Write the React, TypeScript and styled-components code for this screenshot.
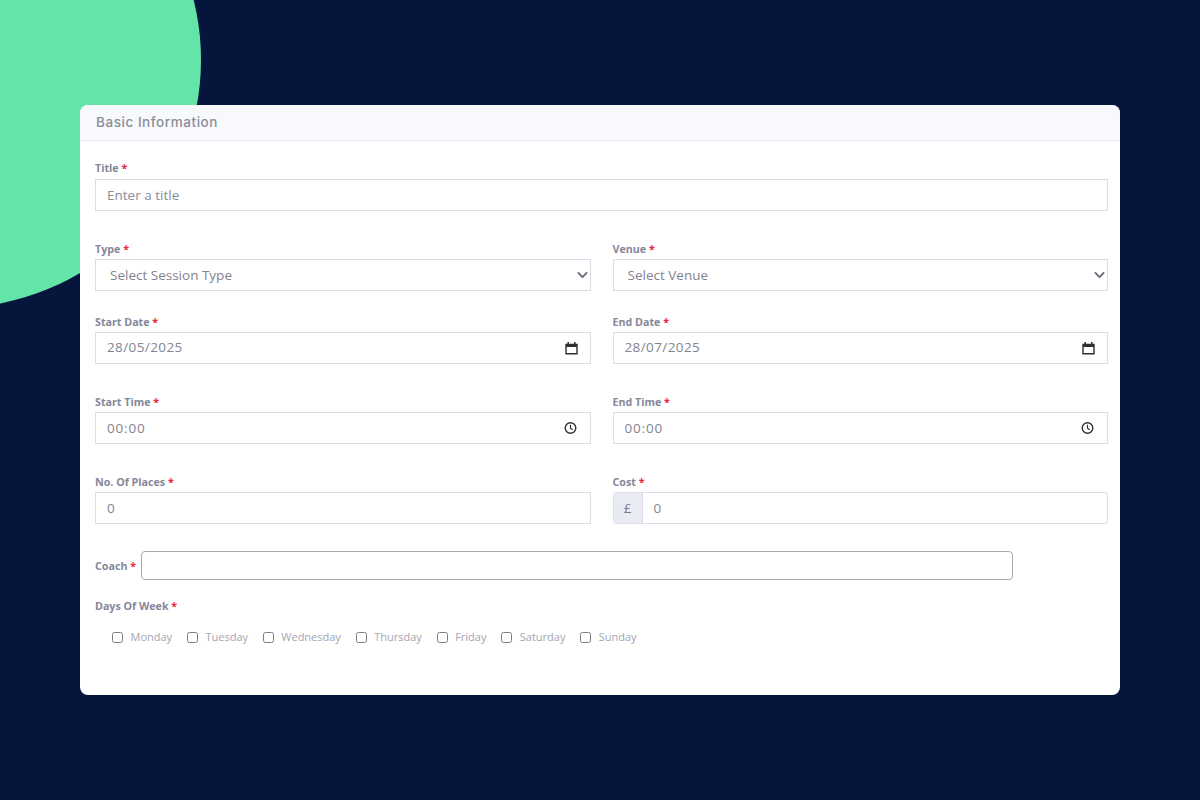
import styled, { createGlobalStyle } from "styled-components";

const GlobalStyle = createGlobalStyle`
  html, body {
    margin: 0;
    padding: 0;
    height: 100%;
    background: #05153b;
    font-family: "Open Sans", "Liberation Sans", sans-serif;
  }
  * {
    box-sizing: border-box;
  }
`;

const Page = styled.div`
  position: relative;
  width: 1200px;
  height: 800px;
  padding: 105px 80px;
  overflow: hidden;
  background: #05153b;
`;

const Blob = styled.div`
  position: absolute;
  left: -295px;
  top: -188px;
  width: 496px;
  height: 496px;
  border-radius: 50%;
  background: #64e4a8;
`;

const Card = styled.section`
  position: relative;
  height: 590px;
  background: #fff;
  border-radius: 8px;
  overflow: hidden;
`;

const CardHeader = styled.header`
  height: 36px;
  padding: 0 16px 2px;
  display: flex;
  align-items: center;
  background: #f8f9fd;
  border-bottom: 1px solid #e9ebf3;
  font-family: "Inter", sans-serif;
  font-size: 13.5px;
  font-weight: 500;
  letter-spacing: 0.55px;
  color: #8a8d9c;
`;

const Form = styled.div`
  padding: 20px 12px 0 15px;
`;

const Row = styled.div<{ $gap: number }>`
  display: grid;
  grid-template-columns: 1fr 1fr;
  column-gap: 22px;
  margin-bottom: ${(p) => p.$gap}px;
`;

const Field = styled.div<{ $full?: boolean }>`
  grid-column: ${(p) => (p.$full ? "1 / -1" : "auto")};
  min-width: 0;
`;

const Label = styled.label<{ $below?: number }>`
  display: block;
  height: 14px;
  margin-bottom: ${(p) => p.$below ?? 3}px;
  font-size: 10.7px;
  line-height: 14px;
  font-weight: 700;
  color: #85879a;
  white-space: nowrap;
`;

const Star = styled.span`
  color: #e8293f;
`;

const Control = styled.div`
  position: relative;
  display: flex;
  height: 32px;
  border: 1px solid #dcdde9;
  background: #fff;
`;

const RoundControl = styled(Control)`
  border-radius: 3px;
`;

const TextInput = styled.input<{ $spacing?: number; $lift?: number }>`
  flex: 1;
  min-width: 0;
  height: 100%;
  padding: 0 0 ${(p) => p.$lift ?? 0}px 11px;
  border: 0;
  outline: 0;
  background: transparent;
  font-family: "Open Sans", sans-serif;
  font-size: 13.5px;
  letter-spacing: ${(p) => p.$spacing ?? 0}px;
  color: #83848f;

  &::placeholder {
    color: #8b8c98;
    opacity: 1;
  }
`;

const SelectInput = styled.select`
  flex: 1;
  height: 100%;
  padding: 0 0 0 14px;
  border: 0;
  outline: 0;
  appearance: none;
  background: transparent;
  font-family: "Open Sans", sans-serif;
  font-size: 13.5px;
  color: #83848f;
`;

const ControlIcon = styled.svg<{ $right: number }>`
  position: absolute;
  top: 50%;
  right: ${(p) => p.$right}px;
  transform: translateY(-50%);
  pointer-events: none;
`;

const Addon = styled.span`
  width: 29px;
  flex: none;
  display: flex;
  align-items: center;
  justify-content: center;
  background: #e9ebf3;
  border-right: 1px solid #dcdde9;
  font-size: 13.5px;
  color: #7b7e90;
`;

const CoachRow = styled.div`
  display: flex;
  align-items: center;
  gap: 5px;
  width: 918px;
  height: 29px;
  margin-bottom: 19px;
`;

const InlineLabel = styled(Label)`
  margin: 0;
`;

const CoachInput = styled.input`
  flex: 1;
  height: 100%;
  border: 1px solid #a9a9a9;
  border-radius: 4px;
  outline: 0;
  background: #fff;
`;

const DaysList = styled.div`
  display: flex;
  align-items: center;
  gap: 14.8px;
  padding: 13px 0 0 17px;
`;

const Day = styled.label`
  display: flex;
  align-items: center;
  gap: 7.5px;
  font-size: 11px;
  line-height: 16px;
  color: #a3a5b4;
`;

const DayBox = styled.input`
  appearance: none;
  width: 11px;
  height: 11px;
  margin: 0;
  border: 1px solid #7d7d7d;
  border-radius: 2.5px;
  background: #fff;
`;

const Chevron = () => (
  <ControlIcon $right={2} width="11" height="11" viewBox="0 0 16 16" fill="none">
    <path d="M2 5l6 6 6-6" stroke="#6a6c7a" strokeWidth="2.8" strokeLinecap="round" strokeLinejoin="round" />
  </ControlIcon>
);

const CalendarIcon = () => (
  <ControlIcon $right={12} width="13" height="14" viewBox="0 0 13 14" fill="none">
    <path d="M1 3.5h11v9.2H1z" fill="none" stroke="#2f2f33" strokeWidth="1.4" />
    <path d="M1 3h11v3H1z" fill="#2f2f33" />
    <path d="M3.2 1v2M9.8 1v2" stroke="#2f2f33" strokeWidth="1.5" />
  </ControlIcon>
);

const ClockIcon = () => (
  <ControlIcon $right={13} width="13" height="13" viewBox="0 0 13 13" fill="none">
    <circle cx="6.5" cy="6.5" r="5.3" stroke="#2f2f33" strokeWidth="1.4" />
    <path d="M6.5 3.3v3.4l2.3 1.5" stroke="#2f2f33" strokeWidth="1.2" />
  </ControlIcon>
);

const Required = ({ text, below }: { text: string; below?: number }) => (
  <Label $below={below}>
    {text} <Star>*</Star>
  </Label>
);

const days = ["Monday", "Tuesday", "Wednesday", "Thursday", "Friday", "Saturday", "Sunday"];

export default function App() {
  return (
    <>
      <GlobalStyle />
      <Page>
        <Blob />
        <Card>
          <CardHeader>Basic Information</CardHeader>
          <Form>
            <Row $gap={31}>
              <Field $full>
                <Required text="Title" below={4} />
                <Control>
                  <TextInput placeholder="Enter a title" />
                </Control>
              </Field>
            </Row>
            <Row $gap={24}>
              <Field>
                <Required text="Type" />
                <Control>
                  <SelectInput defaultValue="">
                    <option value="">Select Session Type</option>
                  </SelectInput>
                  <Chevron />
                </Control>
              </Field>
              <Field>
                <Required text="Venue" />
                <Control>
                  <SelectInput defaultValue="">
                    <option value="">Select Venue</option>
                  </SelectInput>
                  <Chevron />
                </Control>
              </Field>
            </Row>
            <Row $gap={31}>
              <Field>
                <Required text="Start Date" />
                <Control>
                  <TextInput defaultValue="28/05/2025" $spacing={0.4} $lift={2} />
                  <CalendarIcon />
                </Control>
              </Field>
              <Field>
                <Required text="End Date" />
                <Control>
                  <TextInput defaultValue="28/07/2025" $spacing={0.4} $lift={2} />
                  <CalendarIcon />
                </Control>
              </Field>
            </Row>
            <Row $gap={31}>
              <Field>
                <Required text="Start Time" />
                <Control>
                  <TextInput defaultValue="00:00" $spacing={0.8} $lift={1} />
                  <ClockIcon />
                </Control>
              </Field>
              <Field>
                <Required text="End Time" />
                <Control>
                  <TextInput defaultValue="00:00" $spacing={0.8} $lift={1} />
                  <ClockIcon />
                </Control>
              </Field>
            </Row>
            <Row $gap={27}>
              <Field>
                <Required text="No. Of Places" />
                <Control>
                  <TextInput defaultValue="0" />
                </Control>
              </Field>
              <Field>
                <Required text="Cost" />
                <RoundControl>
                  <Addon>£</Addon>
                  <TextInput defaultValue="0" />
                </RoundControl>
              </Field>
            </Row>
            <CoachRow>
              <InlineLabel>
                Coach <Star>*</Star>
              </InlineLabel>
              <CoachInput />
            </CoachRow>
            <Required text="Days Of Week" />
            <DaysList>
              {days.map((day) => (
                <Day key={day}>
                  <DayBox type="checkbox" />
                  {day}
                </Day>
              ))}
            </DaysList>
          </Form>
        </Card>
      </Page>
    </>
  );
}
